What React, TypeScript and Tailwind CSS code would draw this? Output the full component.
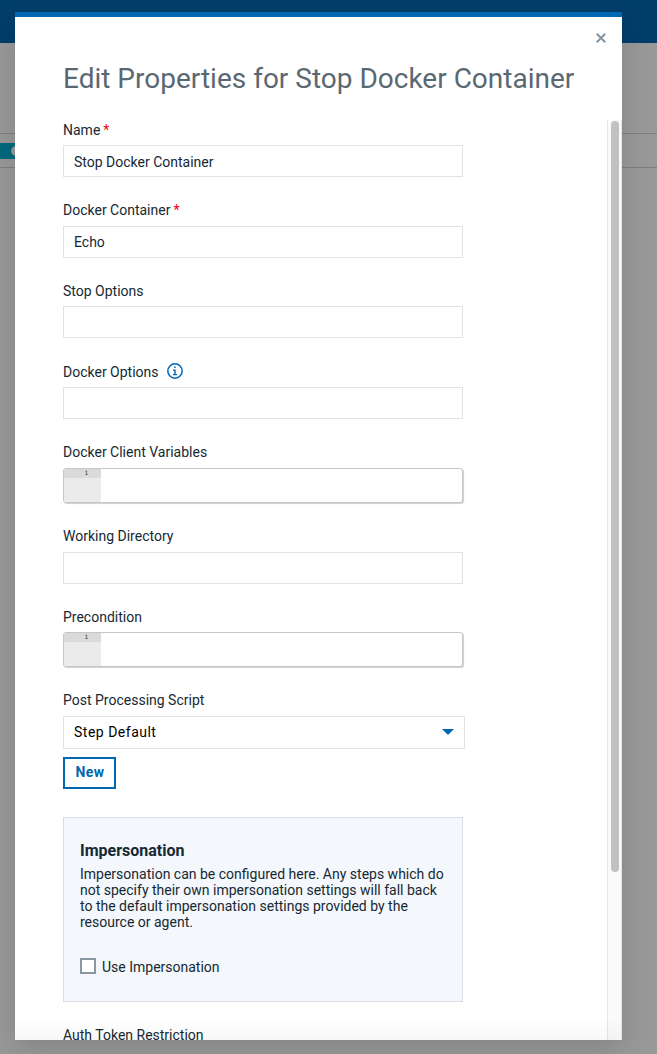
import type { ReactNode } from "react";

type FieldProps = {
  label: string;
  required?: boolean;
  info?: boolean;
  className: string;
  children: ReactNode;
};

function InfoIcon() {
  return (
    <svg width="16" height="16" viewBox="0 0 16 16" className="-mt-px ml-2 block" fill="none">
      <circle cx="8" cy="8" r="7.2" stroke="#0067b1" strokeWidth="1.5" />
      <path d="M7.2 3.4h1.5v1.5H7.2z M6 6.5h2.7v4.6h1.3v1.2H6v-1.2h1.3V7.7H6z" fill="#0067b1" />
    </svg>
  );
}

function Field({ label, required, info, className, children }: FieldProps) {
  return (
    <div className={className}>
      <div className="flex items-start pb-[7px] leading-4 whitespace-pre">
        {label}
        {required && <span className="ml-[3px] text-[#ff0000]">*</span>}
        {info && <InfoIcon />}
      </div>
      {children}
    </div>
  );
}

function TextBox({ value = "", className = "pt-px" }: { value?: string; className?: string }) {
  return (
    <div className={`flex h-8 w-[400px] items-center border border-[#dfe3e6] bg-white px-[10px] leading-4 ${className}`}>
      {value}
    </div>
  );
}

function CodeBox() {
  return (
    <div className="flex h-[35px] w-[400px] overflow-hidden rounded-[3px] border border-[#c6c6c6] bg-white shadow-[1px_1px_1px_#d0d0d0]">
      <div className="w-[37px] bg-[#ebebeb]">
        <div className="h-[9px] bg-[#dadada] pr-[13px] text-right font-['DejaVu_Sans_Mono',monospace] text-[6px] leading-[7px] text-[#333]">
          1
        </div>
      </div>
    </div>
  );
}

export default function App() {
  return (
    <div className="relative h-[1054px] w-[657px] overflow-hidden bg-[#999] font-['Roboto',sans-serif] text-sm text-[#152934]">
      <div className="h-[43px] bg-[#003e6a]" />
      <div className="mt-[90px] flex h-[35px] items-center border-y border-[#7f7f7f]">
        <div className="flex h-4 w-[80px] items-center bg-[#00687c] pl-[11px]">
          <div className="size-[10px] rounded-full bg-[#999]" />
        </div>
      </div>

      <div className="absolute top-3 left-[15px] flex h-[1028px] w-[607px] flex-col border-t-[5px] border-[#0067b1] bg-white shadow-[0_10px_30px_rgba(0,0,0,0.14)]">
        <div className="flex h-[103px] shrink-0 flex-col">
          <div className="flex h-[42px] justify-end pt-4 pr-4">
            <svg width="10" height="10" viewBox="0 0 10 10" className="block">
              <path d="M0.8 0.8L9.2 9.2M9.2 0.8L0.8 9.2" stroke="#8596a3" strokeWidth="2" />
            </svg>
          </div>
          <h1 className="pl-12 text-[28px] leading-[40px] whitespace-nowrap text-[#5a6872]">
            Edit Properties for Stop Docker Container
          </h1>
        </div>

        <div className="flex h-[920px] overflow-hidden">
          <div className="w-[592px] shrink-0 pl-12">
            <Field label="Name" required className="mt-[2px]">
              <TextBox value="Stop Docker Container" />
            </Field>
            <Field label="Docker Container" required className="mt-[25px] [&>div:first-child]:pb-2">
              <TextBox value="Echo" className="pb-px" />
            </Field>
            <Field label="Stop Options" className="mt-[25px]">
              <TextBox />
            </Field>
            <Field label="Docker Options" info className="mt-[26px]">
              <TextBox />
            </Field>
            <Field label="Docker Client Variables" className="mt-[25px] [&>div:first-child]:pb-2">
              <CodeBox />
            </Field>
            <Field label="Working Directory" className="mt-[25px] [&>div:first-child]:pb-2">
              <TextBox />
            </Field>
            <Field label="Precondition" className="mt-[25px]">
              <CodeBox />
            </Field>
            <Field label="Post Processing Script" className="mt-[25px] [&>div:first-child]:pb-2">
              <div className="flex h-[33px] w-[402px] items-center justify-between border border-[#dfe3e6] px-[10px] pb-px tracking-[0.5px] text-black">
                Step Default
                <svg width="12" height="6" viewBox="0 0 12 6" className="block">
                  <path d="M0 0H12L6 6Z" fill="#0067b1" />
                </svg>
              </div>
            </Field>
            <button className="mt-2 flex h-8 w-[53px] items-center justify-center border-2 border-[#0067b1] pb-[2px] pl-px leading-4 font-bold tracking-[0.5px] text-[#0067b1]">
              New
            </button>

            <div className="mt-7 h-[185px] w-[400px] border border-[#dadee2] bg-[#f4f7fb] px-4 pt-[23px]">
              <h2 className="text-base leading-5 font-bold">Impersonation</h2>
              <p className="mt-[5px] leading-4 whitespace-nowrap">
                Impersonation can be configured here. Any steps which do
                <br />
                not specify their own impersonation settings will fall back
                <br />
                to the default impersonation settings provided by the
                <br />
                resource or agent.
              </p>
              <div className="mt-7 flex h-4 items-center gap-[6px]">
                <span className="size-4 border-2 border-[#8897a2] bg-white" />
                <span className="pt-[2px] leading-4">Use Impersonation</span>
              </div>
            </div>
            <div className="mt-[25px] leading-4">Auth Token Restriction</div>
          </div>
          <div className="h-[920px] w-[15px] border-x border-[#e6e6e6] bg-[#fafafa] pt-px pl-[3px]">
            <div className="h-[751px] w-2 rounded-full bg-[#c1c1c1]" />
          </div>
        </div>
        <div className="pointer-events-none absolute inset-x-0 bottom-0 h-[22px] bg-linear-to-b from-transparent to-black/[0.03]" />
      </div>
    </div>
  );
}
